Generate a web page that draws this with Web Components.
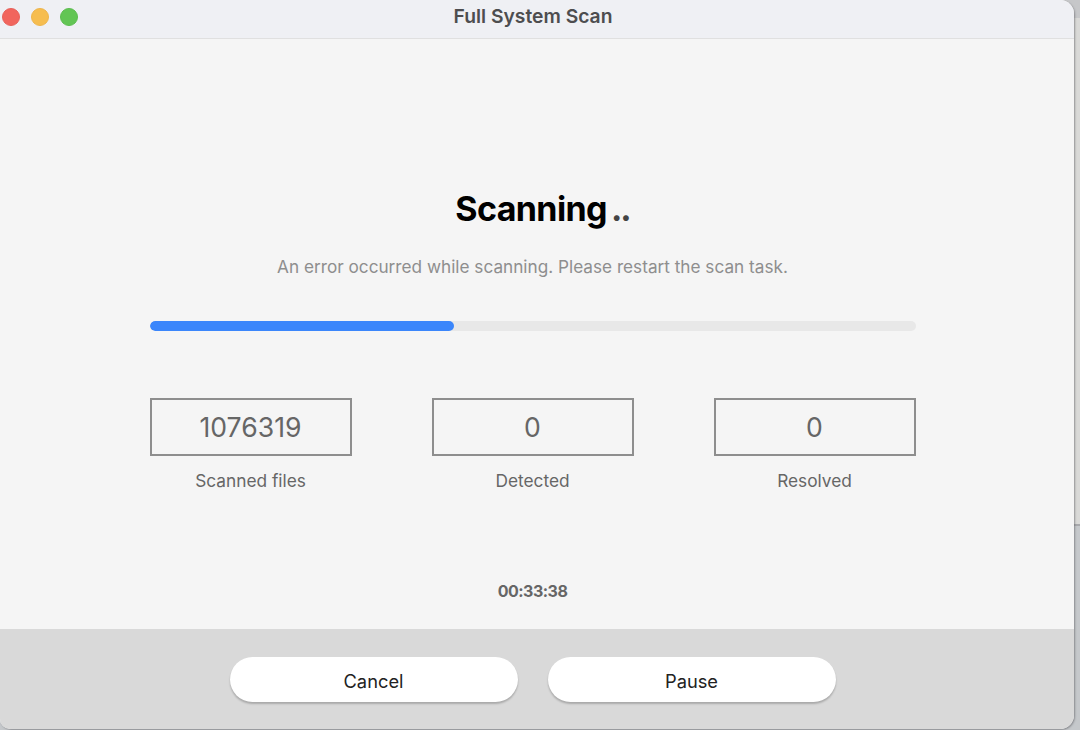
<!DOCTYPE html>
<html><head><meta charset="utf-8">
<style>
html,body{margin:0;padding:0;width:1080px;height:730px;overflow:hidden;font-family:Inter,"Liberation Sans",sans-serif;background:linear-gradient(to bottom,#c6c7c9 0 18px,#d9d9d7 18px 524px,#a8a9ac 524px 526px,#c5c8cb 526px)}
</style></head><body>
<scan-window>
  <title-bar slot="bar">Full System Scan</title-bar>
  <scan-heading slot="main" dots="..">Scanning</scan-heading>
  <scan-message slot="main">An error occurred while scanning. Please restart the scan task.</scan-message>
  <scan-progress slot="main" value="39.7"></scan-progress>
  <stat-row slot="main">
    <stat-box value="1076319">Scanned files</stat-box>
    <stat-box value="0">Detected</stat-box>
    <stat-box value="0">Resolved</stat-box>
  </stat-row>
  <scan-timer slot="main">00:33:38</scan-timer>
  <pill-button slot="foot">Cancel</pill-button>
  <pill-button slot="foot">Pause</pill-button>
</scan-window>
<script>
function def(name,css,html,init){
  customElements.define(name,class extends HTMLElement{
    constructor(){super();const r=this.attachShadow({mode:'open'});r.innerHTML='<style>'+css+'</style>'+html;}
    connectedCallback(){if(init)init(this,this.shadowRoot);}
  });
}
def('scan-window',`
:host{display:flex;flex-direction:column;width:1074px;height:729px;background:#f5f5f5;border-radius:0 14px 14px 10px;overflow:hidden;box-shadow:1px 1px 2px rgba(90,90,95,.55)}
.bar{flex:none}
.main{flex:1;display:flex;flex-direction:column;align-items:center;min-height:0;padding-right:9px}
.foot{flex:none;height:100px;box-sizing:border-box;background:#d9d9d9;display:flex;justify-content:center;align-items:flex-start;gap:30px;padding:28px 9px 0 0}
`,`<div class="bar"><slot name="bar"></slot></div><div class="main"><slot name="main"></slot></div><div class="foot"><slot name="foot"></slot></div>`);
def('title-bar',`
:host{display:flex;align-items:center;height:38px;background:#eff0f4;border-bottom:1px solid #e0e0e0;position:relative;font:600 19.3px/22px Inter,"Liberation Sans",sans-serif;color:#4d4d4f}
.lights{display:flex;gap:11px;position:absolute;left:2px;top:8px}
.l{width:18px;height:18px;border-radius:50%;box-sizing:border-box}
.t{flex:1;text-align:center;padding:0 8px 6px 0}
`,`<div class="lights"><div class="l" style="background:#f1655d;border:1px solid #e8615a"></div><div class="l" style="background:#f6bd4f;border:1px solid #eeb54b"></div><div class="l" style="background:#62c554;border:1px solid #5bbd4e"></div></div><div class="t"><slot></slot></div>`);
def('scan-heading',`
:host{display:block;margin-top:148px;padding-left:20px;font:700 34px/44px Inter,"Liberation Sans",sans-serif;color:#000;letter-spacing:-.6px;white-space:nowrap}
.d{color:#444;margin-left:4px;letter-spacing:-2px;font-size:34px}
`,`<slot></slot><span class="d"></span>`,(el,r)=>{r.querySelector('.d').textContent=el.getAttribute('dots')});
def('scan-message',`
:host{display:block;margin-top:24px;font:400 17.2px/24px Inter,"Liberation Sans",sans-serif;color:#8e8e8e;white-space:nowrap}
`,`<slot></slot>`);
def('scan-progress',`
:host{display:block;width:766px;height:10px;margin-top:42px;background:#e8e8e8;border-radius:5px;overflow:hidden}
.f{height:100%;background:#3b86fb;border-radius:5px}
`,`<div class="f"></div>`,(el,r)=>{r.querySelector('.f').style.width=el.getAttribute('value')+'%'});
def('stat-row',`
:host{display:flex;width:766px;justify-content:space-between;margin-top:67px}
`,`<slot></slot>`);
def('stat-box',`
:host{display:flex;flex-direction:column;align-items:center;width:202px}
.v{box-sizing:border-box;width:100%;height:58px;border:2px solid #8e8e8e;display:flex;align-items:center;justify-content:center;font:400 26.6px Inter,"Liberation Sans",sans-serif;color:#666}
.c{margin-top:13px;font:400 17.3px/24px Inter,"Liberation Sans",sans-serif;color:#666}
`,`<div class="v"></div><div class="c"><slot></slot></div>`,(el,r)=>{r.querySelector('.v').textContent=el.getAttribute('value')});
def('scan-timer',`
:host{display:block;margin-top:86px;font:700 16px/24px Inter,"Liberation Sans",sans-serif;letter-spacing:-.5px;color:#666}
`,`<slot></slot>`);
def('pill-button',`
:host{display:flex;align-items:center;justify-content:center;box-sizing:border-box;padding-top:3px;width:288px;height:45px;background:#fff;border-radius:23px;box-shadow:0 2px 2px rgba(0,0,0,.22);font:400 18.3px Inter,"Liberation Sans",sans-serif;color:#222}
`,`<slot></slot>`);
</script>
</body></html>
